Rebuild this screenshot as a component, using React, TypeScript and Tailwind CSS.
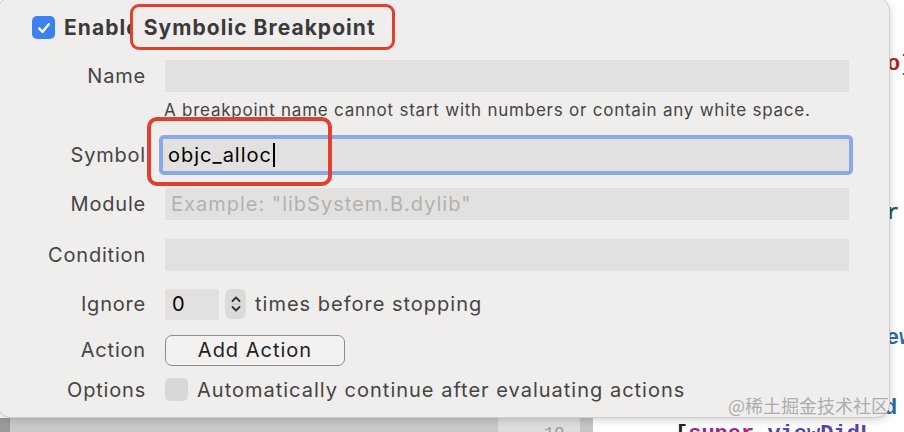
import type { ReactNode } from "react";

const font = { fontFamily: "Inter, 'Noto Sans', sans-serif" };

function Row({ label, children, className = "" }: { label: string; children: ReactNode; className?: string }) {
  return (
    <div className={`flex items-center ${className}`}>
      <div className="w-[146px] shrink-0 pr-[1px] text-right text-[20px] tracking-[0.04em] text-[#444]">{label}</div>
      <div className="ml-[18px] flex flex-1 items-center">{children}</div>
    </div>
  );
}

function Field({ children }: { children?: ReactNode }) {
  return (
    <div className="flex h-[32px] w-[684px] items-center bg-[#e2e1e0] px-[6px] text-[20px] tracking-[0.05em]">
      {children}
    </div>
  );
}

function Check({ on }: { on?: boolean }) {
  if (on) {
    return (
      <div className="flex h-[23px] w-[23px] items-center justify-center rounded-[5px] bg-[#3b82f0]">
        <svg viewBox="0 0 16 16" className="h-[16px] w-[16px]">
          <path d="M3.2 8.4 L6.6 11.8 L12.8 4.2" fill="none" stroke="white" strokeWidth="2.4" strokeLinecap="round" strokeLinejoin="round" />
        </svg>
      </div>
    );
  }
  return <div className="h-[23px] w-[23px] rounded-[5px] bg-[#dad8d7]" />;
}

export default function App() {
  return (
    <div className="relative h-[432px] w-[904px] overflow-hidden bg-white" style={font}>
      {/* editor underneath */}
      <div className="absolute bottom-0 left-0 flex h-[14px] w-full">
        <div className="w-[10px] bg-[#9a9a9a]" />
        <div className="w-[488px] bg-[#c9c9c9]" />
        <div className="relative w-[82px] bg-[#dedede]">
          <span className="absolute left-[46px] top-[7px] font-mono text-[17px] leading-none text-[#999]">19</span>
        </div>
        <div className="w-[13px] bg-[#c5c5c5]" />
        <div className="relative flex-1 bg-white">
          <span className="absolute left-[82px] top-[6px] whitespace-nowrap font-mono text-[22px] font-bold leading-none text-[#222]">
            [<span className="text-[#a0238f]">super</span> <span className="text-[#5b3fb5]">viewDidL</span>
          </span>
        </div>
      </div>
      <span className="absolute left-[887px] top-[48px] font-mono text-[22px] font-bold text-[#b3261e]">o]</span>
      <span className="absolute left-[886px] top-[197px] font-mono text-[22px] font-bold text-[#1f5a4c]">r</span>
      <span className="absolute left-[886px] top-[322px] font-mono text-[22px] font-bold text-[#2b6aa0]">ew</span>
      <span className="absolute left-[884px] top-[392px] font-mono text-[22px] font-bold text-[#2b6aa0]">d</span>

      {/* popover */}
      <div className="absolute left-[-3px] top-[-3px] h-[421px] w-[893px] rounded-[14px] border border-[#cfcdcb] bg-[#efeeed] pl-[3px] pt-[3px] shadow-[0_2px_8px_rgba(0,0,0,0.18)]">
        <div className="flex h-[50px] items-center pl-[31px] pt-[3px]">
          <Check on />
          <span className="ml-[9px] text-[21px] font-bold tracking-[0.05em] text-[#3a3a3a]">Enable</span>
          <span className="relative ml-[4px] text-[21px] font-bold tracking-[0.05em] text-[#3a3a3a]">
            <span className="absolute left-[-14px] top-[-8px] h-[46px] w-[265px] rounded-[9px] border-[3px] border-[#e0402e] bg-[#efeeed]" />
            <span className="relative">Symbolic Breakpoint</span>
          </span>
        </div>

        <Row label="Name" className="mt-[9px]">
          <Field />
        </Row>
        <div className="ml-[163px] mt-[6px] text-[17px] tracking-[0.045em] text-[#444]">
          A breakpoint name cannot start with numbers or contain any white space.
        </div>

        <Row label="Symbol" className="mt-[11px]">
          <div className="relative ml-[-6px] rounded-[5px] border-[4px] border-[#89a9e8]">
            <div className="flex h-[32px] w-[686px] items-center bg-[#e2e1e0] px-[5px] text-[20px] tracking-[0.05em] text-black">
              objc_alloc<span className="ml-[1px] inline-block h-[24px] w-[2px] bg-black" />
            </div>
            <span className="absolute left-[-16px] top-[-22px] h-[69px] w-[185px] rounded-[10px] border-[4px] border-[#e0402e]" />
          </div>
        </Row>

        <Row label="Module" className="mt-[13px]">
          <Field>
            <span className="text-[#b2b1b0]">Example: "libSystem.B.dylib"</span>
          </Field>
        </Row>

        <Row label="Condition" className="mt-[19px]">
          <Field />
        </Row>

        <Row label="Ignore" className="mt-[18px]">
          <div className="flex h-[31px] w-[54px] items-center bg-[#e2e1e0] px-[7px] text-[20px] text-black">0</div>
          <div className="ml-[6px] flex h-[30px] w-[21px] flex-col items-center justify-center rounded-[6px] bg-[#dcdad9]">
            <svg viewBox="0 0 12 22" className="h-[24px] w-[12px]">
              <path d="M2.5 8 L6 4.5 L9.5 8" fill="none" stroke="#333" strokeWidth="1.8" strokeLinecap="round" strokeLinejoin="round" />
              <line x1="1" y1="11" x2="11" y2="11" stroke="#c4c2c1" strokeWidth="1" />
              <path d="M2.5 14 L6 17.5 L9.5 14" fill="none" stroke="#333" strokeWidth="1.8" strokeLinecap="round" strokeLinejoin="round" />
            </svg>
          </div>
          <span className="ml-[9px] text-[20px] tracking-[0.05em] text-[#444]">times before stopping</span>
        </Row>

        <Row label="Action" className="mt-[15px]">
          <div className="flex h-[31px] w-[180px] items-center justify-center rounded-[7px] border border-[#8e8d8c] bg-[#f3f2f1] text-[20px] tracking-[0.05em] text-[#222]">
            Add Action
          </div>
        </Row>

        <Row label="Options" className="mt-[9px]">
          <Check />
          <span className="ml-[9px] text-[20px] tracking-[0.05em] text-[#444]">
            Automatically continue after evaluating actions
          </span>
        </Row>
      </div>

      <span
        className="absolute left-[728px] top-[392px] text-[18px] text-[#9a9a9a]/80"
        style={{ fontFamily: "'Noto Sans CJK SC', sans-serif" }}
      >
        @稀土掘金技术社区
      </span>
    </div>
  );
}
